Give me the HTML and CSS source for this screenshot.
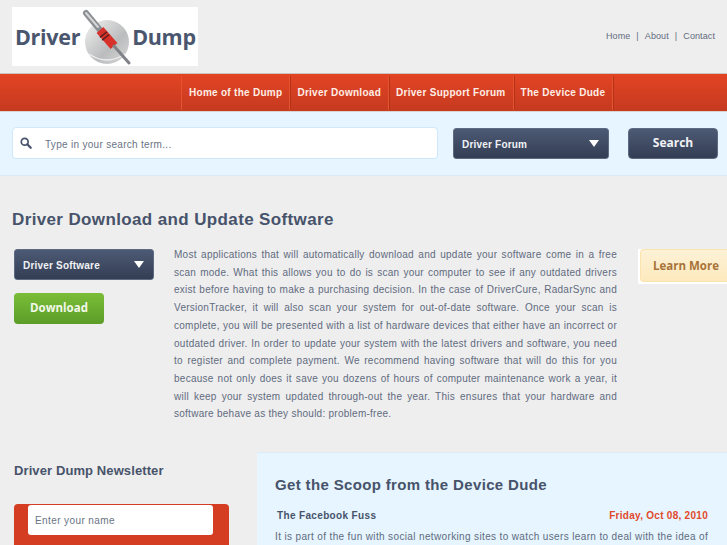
FILE: index.html
```html
<!DOCTYPE html>
<html lang="en">
<head>
  <meta charset="UTF-8">
  <title>Driver Dump</title>
  <link rel="stylesheet" href="styles.css">
</head>
<body>
  <div class="header">
    <div class="logo">
      <span>Driver</span>
      <svg class="logo-disc" width="50" height="56" viewBox="0 0 50 56">
        <defs>
          <linearGradient id="disc" x1="0" y1="0" x2="1" y2="1">
            <stop offset="0" stop-color="#f2f2f2"/>
            <stop offset="0.6" stop-color="#bbbcbd"/>
            <stop offset="1" stop-color="#d8d8d8"/>
          </linearGradient>
        </defs>
        <circle cx="25" cy="33" r="22" fill="url(#disc)"/>
        <path d="M7 45 Q25 57 43 45" fill="none" stroke="#eee" stroke-width="1.5"/>
        <path d="M4 4 L18 21" stroke="#8b8e92" stroke-width="6" stroke-linecap="round"/>
        <path d="M4 4 L16 18" stroke="#d5d6d8" stroke-width="2" stroke-linecap="round"/>
        <path d="M18 21 L32 37" stroke="#d8302a" stroke-width="9"/>
        <path d="M21 25 L25 30" stroke="#5a1f1c" stroke-width="9" stroke-dasharray="1.5 2"/>
        <path d="M32 37 L47 54" stroke="#7f8286" stroke-width="3" stroke-linecap="round"/>
      </svg>
      <span>Dump</span>
    </div>
    <div class="top-links">
      <a>Home</a><i>|</i><a>About</a><i>|</i><a>Contact</a>
    </div>
  </div>

  <div class="nav">
    <a class="nav-first">Home of the Dump</a>
    <a>Driver Download</a>
    <a>Driver Support Forum</a>
    <a>The Device Dude</a>
  </div>

  <div class="search-bar">
    <div class="search-input">
      <svg width="12" height="12" viewBox="0 0 14 14">
        <circle cx="5.5" cy="5.5" r="4" fill="none" stroke="#47536b" stroke-width="2"/>
        <path d="M8.5 8.5 L12.5 12.5" stroke="#47536b" stroke-width="2.6" stroke-linecap="round"/>
      </svg>
      <span>Type in your search term...</span>
    </div>
    <div class="select select-forum">Driver Forum<b class="arrow"></b></div>
    <div class="search-btn">Search</div>
  </div>

  <div class="intro">
    <h1>Driver Download and Update Software</h1>
    <div class="intro-row">
      <div class="intro-left">
        <div class="select">Driver Software<b class="arrow"></b></div>
        <div class="download-btn">Download</div>
      </div>
      <p class="intro-text">Most applications that will automatically download and update your software come in a free scan mode. What this allows you to do is scan your computer to see if any outdated drivers exist before having to make a purchasing decision. In the case of DriverCure, RadarSync and VersionTracker, it will also scan your system for out-of-date software. Once your scan is complete, you will be presented with a list of hardware devices that either have an incorrect or outdated driver. In order to update your system with the latest drivers and software, you need to register and complete payment. We recommend having software that will do this for you because not only does it save you dozens of hours of computer maintenance work a year, it will keep your system updated through-out the year. This ensures that your hardware and software behave as they should: problem-free.</p>
      <div class="learn-wrap"><div class="learn-btn">Learn More</div></div>
    </div>
  </div>

  <div class="bottom">
    <div class="newsletter">
      <h3>Driver Dump Newsletter</h3>
      <div class="news-box">
        <div class="news-input">Enter your name</div>
      </div>
    </div>
    <div class="scoop">
      <h2>Get the Scoop from the Device Dude</h2>
      <div class="scoop-head">
        <b>The Facebook Fuss</b>
        <span>Friday, Oct 08, 2010</span>
      </div>
      <p>It is part of the fun with social networking sites to watch users learn to deal with the idea of</p>
    </div>
  </div>
</body>
</html>
```

FILE: styles.css
```css
html, body {
  height: 545px;
  overflow: hidden;
}

body {
  margin: 0;
  font-family: "Liberation Sans", Arial, sans-serif;
  background-color: #eeeeee;
  color: #47536b;
}

h1, h2, h3, p {
  margin: 0;
}

.header {
  height: 73px;
  display: flex;
  justify-content: space-between;
  align-items: flex-start;
  padding: 7px 12px 0;
  box-sizing: border-box;
}

.logo {
  width: 186px;
  height: 59px;
  background-color: white;
  display: flex;
  align-items: center;
  box-sizing: border-box;
  padding: 0 0 0 3px;
  font-family: "Open Sans", sans-serif;
  font-weight: 700;
  font-size: 21.5px;
  letter-spacing: -0.3px;
  color: #4a566e;
}

.logo-disc {
  margin: 0 0 0 2px;
  flex-shrink: 0;
}

.top-links {
  margin-top: 24px;
  font-size: 9px;
  letter-spacing: 0.1px;
  color: #616b7e;
  line-height: 11px;
}

.top-links i {
  font-style: normal;
  margin: 0 6px;
}

.nav {
  height: 39px;
  box-sizing: border-box;
  border-top: 1px solid #c9c4c0;
  border-bottom: 1px solid #d9d4d0;
  background: linear-gradient(#e34423, #c53a20);
  padding-left: 181px;
  display: flex;
}

.nav a {
  border-right: 1px solid #e5532f;
  box-shadow: 1px 0 0 #b43318;
  margin-top: 2px;
  height: 34px;
  padding: 0 7px 0 7px;
  line-height: 33px;
  font-size: 10px;
  font-weight: bold;
  letter-spacing: 0.28px;
  color: #ffeee6;
  white-space: nowrap;
}

.nav .nav-first {
  border-left: 1px solid #e5532f;
}

.search-bar {
  height: 64px;
  box-sizing: border-box;
  background-color: #e6f5ff;
  border-bottom: 1px solid #d9ebf7;
  padding: 15px 9px 0 12px;
  display: flex;
  align-items: flex-start;
}

.search-input {
  width: 426px;
  height: 32px;
  box-sizing: border-box;
  border: 1px solid #cfe8fb;
  border-radius: 4px;
  background-color: white;
  display: flex;
  align-items: center;
  padding-left: 8px;
  font-size: 10px;
  letter-spacing: 0.3px;
  color: #6a7385;
}

.search-input svg {
  margin: 0 13px 0 -1px;
}

.search-input span {
  margin-top: 2px;
}

.select {
  width: 140px;
  height: 31px;
  box-sizing: border-box;
  border: 1px solid #5d6a82;
  border-radius: 3px;
  background: linear-gradient(#4d5a74, #333e54);
  padding: 1px 8px 0;
  display: flex;
  justify-content: space-between;
  align-items: center;
  font-size: 10px;
  font-weight: bold;
  letter-spacing: 0.2px;
  color: #f0f2f5;
}

.select-forum {
  width: 156px;
  margin: 1px 19px 0 15px;
}

.arrow {
  width: 0;
  height: 0;
  border-left: 5px solid transparent;
  border-right: 5px solid transparent;
  border-top: 7px solid white;
  margin: -2px 1px 0 0;
}

.search-btn {
  width: 90px;
  height: 31px;
  margin-top: 1px;
  box-sizing: border-box;
  border: 1px solid #5d6a82;
  border-radius: 4px;
  background: linear-gradient(#4d5a74, #333e54);
  text-align: center;
  line-height: 27px;
  font-family: "Open Sans", sans-serif;
  font-size: 12px;
  font-weight: 700;
  color: #f0f2f5;
}

.intro {
  padding: 32px 0 0 12px;
}

.intro h1 {
  font-size: 17px;
  line-height: 24px;
  letter-spacing: 0.37px;
}

.intro-row {
  display: flex;
  margin-top: 17px;
  align-items: flex-start;
}

.intro-left {
  width: 140px;
  margin-left: 2px;
  flex-shrink: 0;
}

.download-btn {
  width: 90px;
  height: 31px;
  margin-top: 13px;
  border-radius: 4px;
  background: linear-gradient(#7bbd38, #5b9d27);
  text-align: center;
  line-height: 30px;
  font-family: "Open Sans", sans-serif;
  font-size: 11.5px;
  font-weight: 700;
  color: #f2f8ea;
}

.intro-text {
  width: 443px;
  flex-shrink: 0;
  margin: -3px 0 0 20px;
  font-size: 10px;
  line-height: 17.7px;
  letter-spacing: 0.26px;
  text-align: justify;
  color: #616b7e;
}

.learn-wrap {
  margin: 0 0 0 21px;
  background-color: white;
  padding: 0 0 0 2px;
  flex-grow: 1;
  height: 35px;
}

.learn-btn {
  height: 33px;
  box-sizing: border-box;
  border: 1px solid #fbe3ae;
  border-right: none;
  border-radius: 4px 0 0 4px;
  background: linear-gradient(#fdf2d6, #fde9bd);
  padding-left: 12px;
  line-height: 31px;
  font-family: "Open Sans", sans-serif;
  font-size: 11.5px;
  font-weight: 700;
  color: #a8733a;
  white-space: nowrap;
}

.bottom {
  position: absolute;
  top: 452px;
  left: 0;
  right: 0;
  display: flex;
}

.newsletter {
  width: 257px;
  flex-shrink: 0;
  padding: 10px 0 0 14px;
  box-sizing: border-box;
}

.newsletter h3 {
  font-size: 13px;
  line-height: 18px;
  letter-spacing: 0.1px;
}

.news-box {
  width: 215px;
  height: 60px;
  margin-top: 24px;
  box-sizing: border-box;
  padding: 1px 0 0 14px;
  border-radius: 4px;
  background-color: #d43d22;
}

.news-input {
  width: 185px;
  height: 30px;
  box-sizing: border-box;
  border-radius: 3px;
  background-color: white;
  padding-left: 7px;
  line-height: 31px;
  font-size: 10px;
  letter-spacing: 0.4px;
  color: #6a7385;
}

.scoop {
  flex-grow: 1;
  min-width: 0;
  height: 93px;
  box-sizing: border-box;
  background-color: #e6f5ff;
  border-top: 1px solid #dcebf5;
  padding: 22px 19px 0 18px;
}

.scoop h2 {
  font-size: 15px;
  line-height: 20px;
  letter-spacing: 0.35px;
}

.scoop-head {
  display: flex;
  justify-content: space-between;
  margin-top: 14px;
  padding-left: 2px;
  font-size: 10px;
  line-height: 14px;
  letter-spacing: 0.35px;
}

.scoop-head span {
  font-weight: bold;
  letter-spacing: 0.28px;
  color: #e2492b;
}

.scoop p {
  margin-top: 7px;
  font-size: 10px;
  line-height: 14px;
  letter-spacing: 0.36px;
  white-space: nowrap;
  color: #616b7e;
}
```
